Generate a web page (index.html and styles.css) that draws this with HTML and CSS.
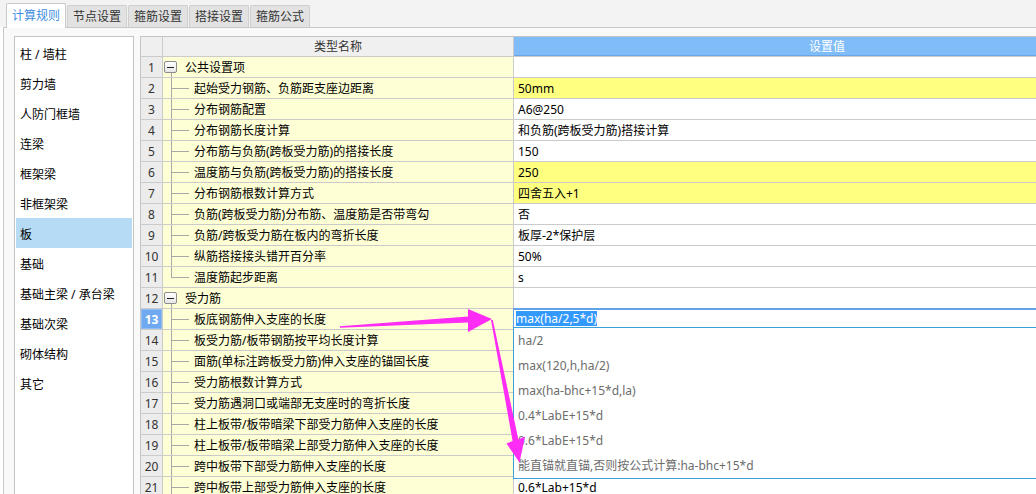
FILE: index.html
```html
<!DOCTYPE html>
<html lang="zh">
<head>
<meta charset="utf-8">
<title>计算规则</title>
<link rel="stylesheet" href="styles.css">
</head>
<body>
<div class="app">
  <div class="tabs">
    <div class="tab active">计算规则</div>
    <div class="tab">节点设置</div>
    <div class="tab">箍筋设置</div>
    <div class="tab">搭接设置</div>
    <div class="tab">箍筋公式</div>
  </div>
  <div class="panel">
    <ul class="side">
      <li>柱 / 墙柱</li>
      <li>剪力墙</li>
      <li>人防门框墙</li>
      <li>连梁</li>
      <li>框架梁</li>
      <li>非框架梁</li>
      <li class="sel">板</li>
      <li>基础</li>
      <li>基础主梁 / 承台梁</li>
      <li>基础次梁</li>
      <li>砌体结构</li>
      <li>其它</li>
    </ul>
    <div class="grid">
      <div class="row head"><div class="num"></div><div class="name">类型名称</div><div class="val">设置值</div></div>
      <div class="row"><div class="num">1</div><div class="name group"><span class="box"><i></i></span>公共设置项</div><div class="val"></div></div>
      <div class="row"><div class="num">2</div><div class="name"><span class="branch"></span>起始受力钢筋、负筋距支座边距离</div><div class="val hl">50mm</div></div>
      <div class="row"><div class="num">3</div><div class="name"><span class="branch"></span>分布钢筋配置</div><div class="val">A6@250</div></div>
      <div class="row"><div class="num">4</div><div class="name"><span class="branch"></span>分布钢筋长度计算</div><div class="val">和负筋(跨板受力筋)搭接计算</div></div>
      <div class="row"><div class="num">5</div><div class="name"><span class="branch"></span>分布筋与负筋(跨板受力筋)的搭接长度</div><div class="val">150</div></div>
      <div class="row"><div class="num">6</div><div class="name"><span class="branch"></span>温度筋与负筋(跨板受力筋)的搭接长度</div><div class="val hl">250</div></div>
      <div class="row"><div class="num">7</div><div class="name"><span class="branch"></span>分布钢筋根数计算方式</div><div class="val hl">四舍五入+1</div></div>
      <div class="row"><div class="num">8</div><div class="name"><span class="branch"></span>负筋(跨板受力筋)分布筋、温度筋是否带弯勾</div><div class="val">否</div></div>
      <div class="row"><div class="num">9</div><div class="name"><span class="branch"></span>负筋/跨板受力筋在板内的弯折长度</div><div class="val">板厚-2*保护层</div></div>
      <div class="row"><div class="num">10</div><div class="name"><span class="branch"></span>纵筋搭接接头错开百分率</div><div class="val">50%</div></div>
      <div class="row"><div class="num">11</div><div class="name"><span class="branch last"></span>温度筋起步距离</div><div class="val">s</div></div>
      <div class="row"><div class="num">12</div><div class="name group"><span class="box"><i></i></span>受力筋</div><div class="val"></div></div>
      <div class="row"><div class="num cur">13</div><div class="name"><span class="branch"></span>板底钢筋伸入支座的长度</div><div class="val edit"><div class="editor"><span class="selected">max(ha/2,5*d)</span></div></div></div>
      <div class="row"><div class="num">14</div><div class="name"><span class="branch"></span>板受力筋/板带钢筋按平均长度计算</div><div class="val"></div></div>
      <div class="row"><div class="num">15</div><div class="name"><span class="branch"></span>面筋(单标注跨板受力筋)伸入支座的锚固长度</div><div class="val"></div></div>
      <div class="row"><div class="num">16</div><div class="name"><span class="branch"></span>受力筋根数计算方式</div><div class="val"></div></div>
      <div class="row"><div class="num">17</div><div class="name"><span class="branch"></span>受力筋遇洞口或端部无支座时的弯折长度</div><div class="val"></div></div>
      <div class="row"><div class="num">18</div><div class="name"><span class="branch"></span>柱上板带/板带暗梁下部受力筋伸入支座的长度</div><div class="val"></div></div>
      <div class="row"><div class="num">19</div><div class="name"><span class="branch"></span>柱上板带/板带暗梁上部受力筋伸入支座的长度</div><div class="val"></div></div>
      <div class="row"><div class="num">20</div><div class="name"><span class="branch"></span>跨中板带下部受力筋伸入支座的长度</div><div class="val"></div></div>
      <div class="row"><div class="num">21</div><div class="name"><span class="branch"></span>跨中板带上部受力筋伸入支座的长度</div><div class="val">0.6*Lab+15*d</div></div>
      <ul class="dropdown">
        <li>ha/2</li>
        <li>max(120,h,ha/2)</li>
        <li>max(ha-bhc+15*d,la)</li>
        <li>0.4*LabE+15*d</li>
        <li>0.6*LabE+15*d</li>
        <li>能直锚就直锚,否则按公式计算:ha-bhc+15*d</li>
      </ul>
    </div>
  </div>
  <svg class="arrows" width="1036" height="494" viewBox="0 0 1036 494">
    <polygon points="340,326.3 468,316.5 468,309 492,319 468,332 468,322.5 340,327.7"/>
    <polygon points="491,320 492.8,320 518.4,439.5 525,436.5 519.5,462.5 506.5,443.5 512.6,441"/>
  </svg>
</div>
</body>
</html>
```

FILE: styles.css
```css
* { box-sizing: border-box; }
html, body { margin: 0; padding: 0; }
body {
  width: 1036px;
  height: 494px;
  overflow: hidden;
  background: #ffffff;
  font-family: "Noto Sans", "Noto Sans CJK SC", sans-serif;
  font-size: 12px;
  color: #000;
}
.app { position: relative; width: 1036px; height: 494px; overflow: hidden; }

.tabs {
  display: flex;
  align-items: flex-end;
  gap: 1px;
  height: 27px;
  padding-left: 6px;
  background: #f3f3f3;
}
.tab {
  width: 60px;
  height: 22px;
  border: 1px solid #cfcfcf;
  border-bottom: none;
  background: #e2e2e2;
  color: #333;
  text-align: center;
  line-height: 22px;
  border-radius: 2px 2px 0 0;
}
.tab.active {
  position: relative;
  z-index: 1;
  height: 25px;
  margin-bottom: -1px;
  background: #ffffff;
  color: #3d8de0;
  line-height: 24px;
  border-color: #c8c8c8;
}

.panel {
  display: flex;
  gap: 6px;
  align-items: flex-start;
  margin-left: 3px;
  border-left: 1px solid #c8c8c8;
  border-top: 1px solid #c8c8c8;
  padding: 8px 0 0 10px;
  background: #f9f9f9;
  height: 470px;
}

.side {
  list-style: none;
  margin: 0;
  padding: 1px;
  width: 120px;
  flex: 0 0 120px;
  height: 470px;
  background: #fff;
  border: 1px solid #c4c4c4;
}
.side li {
  height: 30px;
  padding: 4px 0 0 4px;
  line-height: 26px;
  white-space: nowrap;
}
.side li.sel { background: #b6dbf5; }

.grid {
  position: relative;
  flex: 0 0 1000px;
  width: 1000px;
  border-top: 1px solid #c4c4c4;
  border-left: 1px solid #c4c4c4;
  background: #fff;
}
.row {
  display: flex;
  height: 21px;
  border-bottom: 1px solid #cbcbcb;
}
.num {
  flex: 0 0 22px;
  border-right: 1px solid #cbcbcb;
  background: #ececec;
  color: #333;
  text-align: center;
  padding-top: 2px;
  line-height: 18px;
}
.num.cur {
  background: #6faaf0;
  color: #fff;
  font-weight: bold;
  box-shadow: inset 0 0 0 1px #8dbdf3;
}
.name {
  flex: 0 0 351px;
  display: flex;
  align-items: center;
  border-right: 1px solid #cbcbcb;
  background: #ffffd6;
  white-space: nowrap;
  padding-top: 2px;
  line-height: 18px;
}
.val {
  flex: 1 1 auto;
  padding: 2px 0 0 4px;
  line-height: 18px;
  white-space: nowrap;
  background: #fff;
}
.val.hl { background: #ffff80; }

.row.head { height: 20px; }
.head .num { background: #efefef; }
.head .name {
  justify-content: center;
  background: #f0f0f0;
  color: #333;
  padding-top: 1px;
  line-height: 18px;
}
.head .val {
  padding: 1px 0 0 0;
  text-align: center;
  background: #80bcf8;
  color: #fff;
  line-height: 18px;
  box-shadow: inset 0 -1px 0 #6aa6ea;
}

.branch {
  flex: 0 0 31px;
  height: 20px;
  margin-top: -2px;
  background:
    linear-gradient(#a8a8a8, #a8a8a8) 8px 0 / 1px 100% no-repeat,
    linear-gradient(#a8a8a8, #a8a8a8) 8px 10px / 18px 1px no-repeat;
}
.branch.last {
  background:
    linear-gradient(#a8a8a8, #a8a8a8) 8px 0 / 1px 11px no-repeat,
    linear-gradient(#a8a8a8, #a8a8a8) 8px 10px / 18px 1px no-repeat;
}
.name.group {
  background:
    linear-gradient(#a8a8a8, #a8a8a8) 8px 16px / 1px 5px no-repeat,
    #ffffd6;
}
.box {
  display: inline-flex;
  align-items: center;
  justify-content: center;
  width: 13px;
  height: 12px;
  margin: -2px 8px 0 1px;
  border: 1px solid #8c8c8c;
  border-radius: 2px;
  background: linear-gradient(#ffffff, #e6e6e6);
}
.box i {
  display: block;
  width: 7px;
  height: 1px;
  background: #222;
}

.val.edit { position: relative; padding: 0; }
.editor {
  position: absolute;
  top: -1px;
  left: -1px;
  right: -40px;
  height: 20px;
  border: 1px solid #62a2e6;
  border-top-width: 2px;
  background: #fff;
  padding: 1px 0 0 2px;
  line-height: 15px;
}
.selected {
  display: inline-block;
  background: #3399ff;
  color: #fff;
  line-height: 15px;
}

.dropdown {
  position: absolute;
  top: 290px;
  left: 372px;
  width: 700px;
  margin: 0;
  padding: 0;
  list-style: none;
  background: #fff;
  border: 1px solid #3aa0d8;
}
.dropdown li {
  height: 25px;
  line-height: 25px;
  padding-left: 4px;
  color: #6c6c6c;
  white-space: nowrap;
}

.arrows {
  position: absolute;
  top: 0;
  left: 0;
  pointer-events: none;
}
.arrows polygon { fill: #ff2cf5; }
```
